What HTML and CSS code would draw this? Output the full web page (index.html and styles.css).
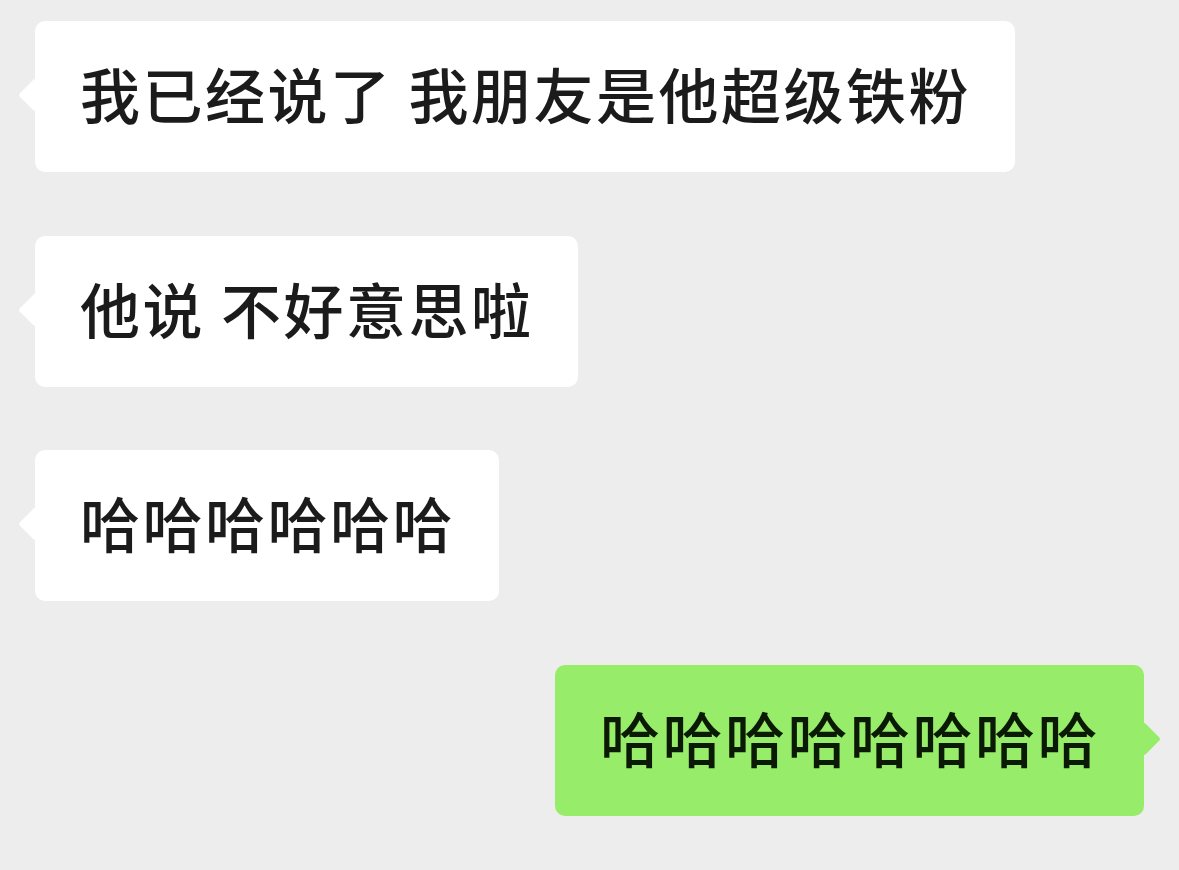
FILE: index.html
```html
<!DOCTYPE html>
<html lang="zh-CN">

<head>
  <meta charset="UTF-8" />
  <meta name="viewport" content="width=device-width, initial-scale=1.0" />
  <title>聊天记录</title>
  <link rel="stylesheet" href="styles.css">
</head>

<body>
  <div class="chat">
    <p class="msg left">我已经说了 我朋友是他超级铁粉</p>
    <p class="msg left">他说 不好意思啦</p>
    <p class="msg left">哈哈哈哈哈哈</p>
    <p class="msg right">哈哈哈哈哈哈哈哈</p>
  </div>
</body>

</html>
```

FILE: styles.css
```css
body {
  margin: 0;
  background-color: #ededed;
  font-family: "Noto Sans CJK SC", "Noto Sans", sans-serif;
}

.chat {
  display: flex;
  flex-direction: column;
  align-items: flex-start;
  gap: 63.5px;
  padding: 21px 35px;
}

.msg {
  position: relative;
  margin: 0;
  padding: 41px 44px 49px 45px;
  font-size: 60px;
  font-weight: 500;
  line-height: 61px;
  letter-spacing: 2.5px;
  white-space: nowrap;
  border-radius: 10px;
}

/* 小三角 */
.msg::before {
  content: "";
  position: absolute;
  top: 62px;
  width: 24px;
  height: 24px;
  border-radius: 3px;
  transform: rotate(45deg);
}

.msg.left {
  color: #1b1b1b;
  background-color: #fff;
}

.msg.left::before {
  left: -12px;
  background-color: #fff;
}

.msg.right {
  align-self: flex-end;
  color: #0a1a04;
  background-color: #97ec6a;
}

.msg.right::before {
  right: -12px;
  background-color: #97ec6a;
}
```
